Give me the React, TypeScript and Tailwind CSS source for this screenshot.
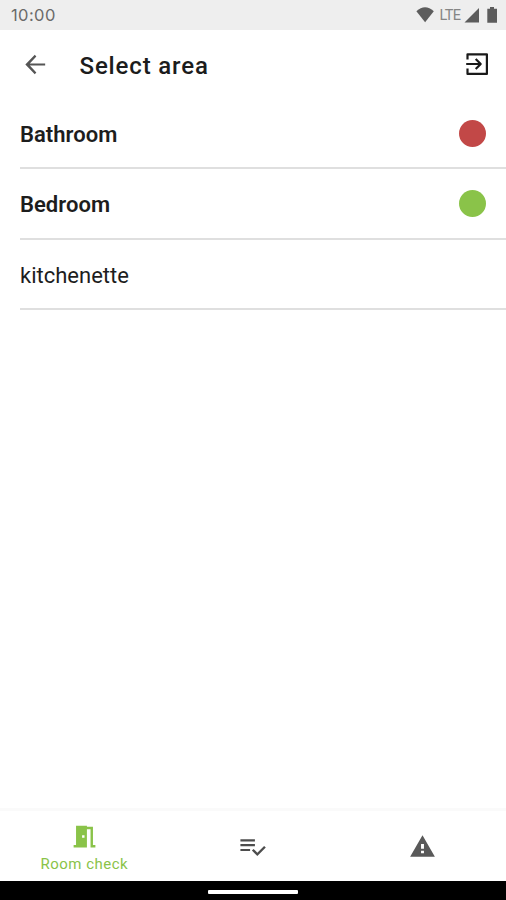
import React from "react";

type Area = { name: string; dot?: string; checked: boolean };

const areas: Area[] = [
  { name: "Bathroom", dot: "bg-[#c24847]", checked: true },
  { name: "Bedroom", dot: "bg-[#8ac349]", checked: true },
  { name: "kitchenette", checked: false },
];

function StatusBar() {
  return (
    <div className="flex h-[30px] shrink-0 items-center bg-[#eeeeee] pl-[11px] text-[#6a6a6a]">
      <span className="flex-1 pt-[1px] font-[Inter,sans-serif] text-[16.5px] leading-none tracking-[0.4px]">10:00</span>
      <svg className="h-[30px] w-[90px]" viewBox="416 0 90 30" fill="#5c5c5c">
        <path d="M416.4 11.2 Q425 3.500 433.800 11.2 L425.1 22.3 Z" />
        <text x="439.4" y="20" fontFamily="Roboto, sans-serif" fontSize="14.5" textLength="21.5" fill="#858585">LTE</text>
        <path d="M479 8V22.500H464.5Z" />
        <path d="M490 7h4v1.7h3V22.800h-9.700V8.700h2.700z" />
      </svg>
    </div>
  );
}

function Header() {
  return (
    <header className="flex h-[69px] shrink-0 items-center pb-1 pl-[21px] pr-[15px]">
      <svg className="mt-[4px] size-[29px]" viewBox="0 0 24 24" fill="#555555">
        <path d="M20 11.100H7.300l5.400-5.700L11.400 4 3.600 12l7.800 8 1.300-1.400-5.400-5.700H20z" />
      </svg>
      <h1 className="ml-[29.500px] mt-[6px] flex-1 font-[Roboto,sans-serif] text-[24px] font-medium leading-7 tracking-[0.85px] text-[#1c1c1c]">Select area</h1>
      <svg className="mt-[3px] size-[28px]" viewBox="0 0 28 28" fill="none" stroke="#1a1a1a" strokeWidth="2.200" strokeLinejoin="round">
        <path d="M4.500 9.400V4.300H23.900V23.900H4.500V18.600" />
        <path d="M3.200 14H17.600M12.700 9 17.700 14 12.700 19" />
      </svg>
    </header>
  );
}

function NavigationBar() {
  return (
    <nav className="grid h-[73px] shrink-0 grid-cols-3 border-t-[3px] border-[#fafafa]">
      <div className="flex flex-col items-center pt-[11px] text-[#8ac349]">
        <svg className="size-[29px]" viewBox="0 0 24 24" fill="currentColor">
          <path d="M14 6v15H3v-2h2V3h9v1h5v15h2v2h-4V6h-3zm-4 5v2h2v-2h-2z" />
        </svg>
        <span className="mt-[4px] font-[Roboto,sans-serif] text-[15px] leading-[18px] tracking-[0.5px]">Room check</span>
      </div>
      <div className="flex justify-center pt-[20.500px]">
        <svg className="size-[29px]" viewBox="0 0 24 24" fill="#4d4d4d">
          <path d="M14 10H2v1.800h12zm0-4H2v1.800h12zM2 15.800h8V14H2zM21.600 11.500 23 12.900l-6.990 7-4.510-4.500L12.900 14l3.110 3.100z" />
        </svg>
      </div>
      <div className="flex justify-center pl-px pt-[22px]">
        <svg className="size-[27px]" viewBox="0 0 24 24" fill="#595959">
          <path d="M1 21h22L12 2 1 21zm12.300-3h-2.600v-2.300h2.600v2.300zm0-4h-2.600V9.700h2.600V14z" />
        </svg>
      </div>
    </nav>
  );
}

export default function App() {
  return (
    <div className="flex h-[900px] w-[506px] flex-col overflow-hidden bg-white">
      <StatusBar />
      <Header />
      <main className="flex-1 pl-[20px]">
        {areas.map((area) => (
          <div key={area.name} className="flex h-[70.300px] items-center justify-between border-b-2 border-[#dfdfdf] pr-[20px]">
            <span className={`pt-[4px] font-[Roboto,sans-serif] text-[22px] leading-7 text-[#1d1d1d] ${area.checked ? "font-semibold tracking-[0.03px]" : "font-normal tracking-[0px]"}`}>
              {area.name}
            </span>
            {area.dot && <span className={`size-[27px] rounded-full ${area.dot}`} />}
          </div>
        ))}
      </main>
      <NavigationBar />
      <div className="flex h-[19px] shrink-0 items-center justify-center bg-black pt-[2px]">
        <span className="h-[4px] w-[90px] rounded-[1px] bg-white" />
      </div>
    </div>
  );
}
